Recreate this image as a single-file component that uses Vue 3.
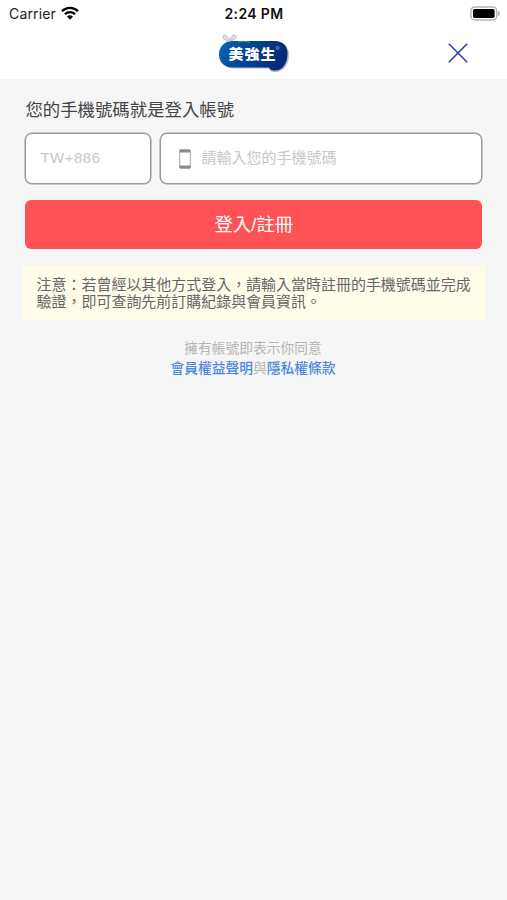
<template>
  <div class="screen">
    <header class="top">
      <div class="status">
        <div class="carrier">
          <span>Carrier</span>
          <svg class="wifi" width="18" height="14" viewBox="0 0 18 14">
            <path d="M1 5.1a11.6 11.6 0 0 1 16 0" />
            <path d="M3.9 8.2a7.4 7.4 0 0 1 10.2 0" />
            <path class="dot" d="M6 10.6a4.3 4.3 0 0 1 6 0L9 13.8z" />
          </svg>
        </div>
        <span class="time">2:24 PM</span>
        <svg class="battery" width="31" height="15" viewBox="0 0 31 15">
          <rect class="shell" x="0.9" y="0.9" width="25.8" height="13" rx="4" />
          <rect x="3" y="3" width="21.6" height="8.9" rx="1.6" />
          <path class="cap" d="M28 5c2.6 1 2.6 4 0 5z" />
        </svg>
      </div>

      <div class="nav">
        <svg class="logo" width="72" height="40" viewBox="0 0 72 40">
          <defs>
            <linearGradient id="logoBlue" x1="0" y1="0" x2="1" y2="0.25">
              <stop offset="0" stop-color="#086ab4" />
              <stop offset="0.45" stop-color="#064596" />
              <stop offset="1" stop-color="#052a7c" />
            </linearGradient>
          </defs>
          <g class="bow">
            <path d="M11.500 6C9 0 4.500-.5 5 3.500c.3 2.500 3.500 3.500 6.500 2.500z" />
            <path d="M12 6c1-5 5.500-7 6-3.500.3 2.500-2.500 4-6 3.500z" />
            <path d="M11.500 6l-3 2M12 6l3.500 1.500" />
          </g>
          <path
            class="shadow"
            d="M16 8h42c8.500 0 13 5 13 12.500C71 30 66 38 57 38c-3.500 0-5-1-6-3.500H16C7 34.500 2 29 2 21.500S7 8 16 8z"
          />
          <path
            fill="url(#logoBlue)"
            d="M15 7h42c8 0 12.500 5 12.500 12.500C69.500 29 65 36.500 57 36.500c-4 0-5-1-6-3H15C6 33.500 1 28 1 20.500S6 7 15 7z"
          />
          <path class="shine" d="M20 7.800c5-1 9-.5 12 1" />
          <text transform="translate(10.500 25.200) scale(1 .9)">美強生</text>
          <circle class="reg" cx="59.500" cy="13.800" r="1.400" />
        </svg>
        <button class="close" type="button" aria-label="關閉">
          <svg width="20" height="20" viewBox="0 0 20 20">
            <path d="M.8.8l18.400 18.400M19.200.8L.8 19.200" />
          </svg>
        </button>
      </div>
    </header>

    <main class="content">
      <h1>您的手機號碼就是登入帳號</h1>

      <div class="fields">
        <input class="field code" type="text" placeholder="TW+886" />
        <label class="field phone">
          <svg width="12" height="20" viewBox="0 0 12 20">
            <rect class="body" x="0.7" y="0.9" width="10.600" height="18.200" rx="1" />
            <path d="M.5.5h11v3H.5zM.5 16.500h11v3H.5z" />
          </svg>
          <input v-model="phone" type="tel" placeholder="請輸入您的手機號碼" />
        </label>
      </div>

      <button class="submit" type="button">登入/註冊</button>

      <p class="notice">
        注意：若曾經以其他方式登入，請輸入當時註冊的手機號碼並完成<br />驗證，即可查詢先前訂購紀錄與會員資訊。
      </p>

      <p class="terms">
        擁有帳號即表示你同意<br /><a href="#">會員權益聲明</a>與<a href="#">隱私權條款</a>
      </p>
    </main>
  </div>
</template>

<script setup>
import { ref } from "vue";

const phone = ref("");
</script>

<style>
body {
  background: #f6f6f6;
}
</style>

<style scoped>
.screen {
  min-height: 100vh;
  background: #f6f6f6;
  font-family: "Liberation Sans", "Noto Sans CJK TC", sans-serif;
}

.top {
  height: 79px;
  background: #fff;
}

/* ===== Status bar ===== */
.status {
  display: grid;
  grid-template-columns: 1fr auto 1fr;
  align-items: center;
  height: 27px;
  padding: 0 6px 0 9px;
  font-family: Inter, "Liberation Sans", sans-serif;
  font-size: 14px;
  line-height: 27px;
  color: #222;
}

.carrier {
  display: flex;
  align-items: center;
  gap: 5px;
  letter-spacing: 0.15px;
}

.wifi {
  margin-top: -2px;
  fill: none;
  stroke: #000;
  stroke-width: 2.3;
}

.wifi .dot {
  fill: #000;
  stroke: none;
}

.time {
  margin-right: 2px;
  font-weight: 600;
  letter-spacing: 0.35px;
  color: #111;
}

.battery {
  justify-self: end;
  margin-top: -1px;
}

.battery .shell {
  fill: #fff;
  stroke: #b5b5b5;
  stroke-width: 1.5;
}

.battery .cap {
  fill: #b5b5b5;
}

/* ===== Logo row ===== */
.nav {
  display: grid;
  grid-template-columns: 1fr 72px 1fr;
  align-items: center;
  height: 52px;
  padding-right: 39px;
  padding-left: 39px;
}

.logo {
  grid-column: 2;
  margin-top: 1px;
}

.logo text {
  fill: #fff;
  font-family: "Noto Sans CJK TC", sans-serif;
  font-size: 15px;
  font-weight: 900;
  letter-spacing: 1px;
}

.bow {
  fill: #ddd;
  stroke: #c2c2c2;
  stroke-width: 1;
}

.shadow {
  fill: #b4bac0;
}

.shine {
  fill: none;
  stroke: #5ba39c;
  stroke-width: 0.8;
}

.reg {
  fill: none;
  stroke: #7e9cce;
  stroke-width: 0.9;
}

.close {
  justify-self: end;
  display: flex;
  margin-top: -1px;
  padding: 0;
  border: 0;
  background: none;
}

.close path {
  stroke: #2540a0;
  stroke-width: 1.5;
}

/* ===== Login form ===== */
.content {
  padding: 19px 24.6px 0 25.4px;
}

h1 {
  margin: 0;
  font-size: 17.4px;
  font-weight: 400;
  line-height: 24px;
  color: #444;
}

.fields {
  display: flex;
  gap: 9px;
  margin-top: 11px;
}

.field {
  box-sizing: border-box;
  height: 51px;
  border: 1px solid #999;
  border-radius: 7px;
  background: #fff;
  box-shadow: 0 0 0 0.5px #999;
}

input {
  font-family: inherit;
  font-size: 15px;
  outline: none;
}

input::placeholder {
  color: #c8c8c8;
  opacity: 1;
}

.code {
  width: 126px;
  padding: 0 14px 2px;
  letter-spacing: 0.5px;
}

.phone {
  display: flex;
  flex: 1;
  align-items: center;
  gap: 10px;
  padding: 0 18px;
}

.phone svg {
  fill: #8b8b8b;
}

.phone .body {
  fill: #fff;
  stroke: #a5a5a5;
}

.phone input {
  flex: 1;
  min-width: 0;
  padding: 0 0 2px;
  border: 0;
  background: none;
}

.submit {
  display: block;
  width: 100%;
  height: 49px;
  margin-top: 16px;
  padding: 0 0 3px;
  border: 0;
  border-radius: 6px;
  background: #ff5256;
  font-family: inherit;
  font-size: 18.4px;
  color: #fff;
}

.notice {
  margin: 16px -3px 0 -3.4px;
  padding: 11px 0 10px 14.6px;
  background: #fffde8;
  font-size: 14.97px;
  line-height: 17px;
  color: #666;
  white-space: nowrap;
}

.terms {
  margin: 19px 2px 0 0;
  font-size: 13.75px;
  line-height: 20px;
  text-align: center;
  color: #b4b4b4;
}

.terms a {
  font-weight: 500;
  color: #4d86dc;
  text-decoration: none;
}
</style>
